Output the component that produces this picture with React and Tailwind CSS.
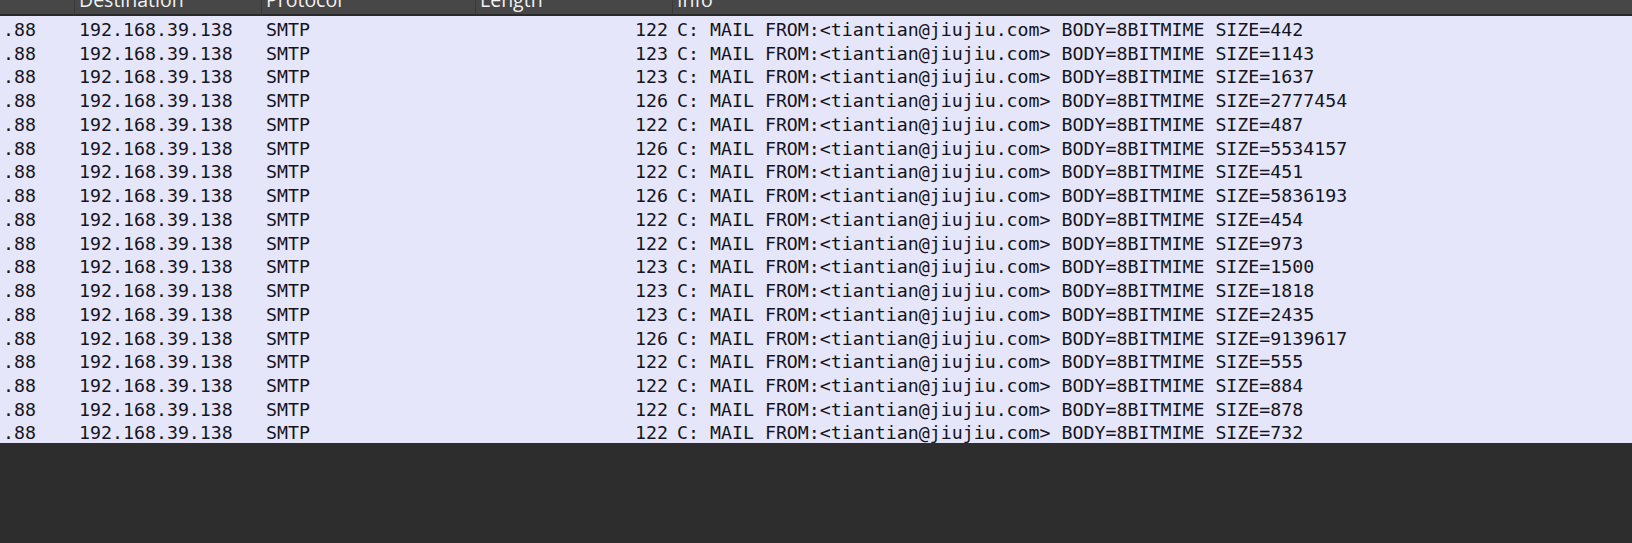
import React from 'react'

const rows = [
  [122, 442],
  [123, 1143],
  [123, 1637],
  [126, 2777454],
  [122, 487],
  [126, 5534157],
  [122, 451],
  [126, 5836193],
  [122, 454],
  [122, 973],
  [123, 1500],
  [123, 1818],
  [123, 2435],
  [126, 9139617],
  [122, 555],
  [122, 884],
  [122, 878],
  [122, 732],
]

const mono = { fontFamily: '"DejaVu Sans Mono", "Liberation Mono", monospace' }

function HeaderCell({ label, className }) {
  return (
    <div className={`h-full overflow-hidden border-l border-[#383838] pl-[4px] ${className}`}>
      <div className="leading-[14px] -mt-[7px] whitespace-nowrap">{label}</div>
    </div>
  )
}

export default function App() {
  return (
    <div className="w-full h-[543px] bg-[#2d2d2d] overflow-hidden">
      {/* Column header */}
      <div
        className="flex h-[16px] bg-[#474747] border-b-2 border-[#2a2a2a] text-[#f2f2f2] text-[19.5px]"
        style={{ fontFamily: '"Open Sans", "Noto Sans", sans-serif' }}
      >
        <div className="w-[74px] h-full" />
        <HeaderCell label="Destination" className="w-[187px]" />
        <HeaderCell label="Protocol" className="w-[214px]" />
        <HeaderCell label="Length" className="w-[197px]" />
        <HeaderCell label="Info" className="flex-1" />
      </div>

      {/* Packet rows */}
      <div className="bg-[#e6e6fa] text-[#141420] text-[18.25px]" style={mono}>
        {rows.map(([len, size], i) => (
          <div key={i} className="flex h-[23.74px] leading-[20px] pt-[4px] whitespace-nowrap">
            <div className="w-[74px] pl-[3px]">.88</div>
            <div className="w-[187px] pl-[5px]">192.168.39.138</div>
            <div className="w-[214px] pl-[5px]">SMTP</div>
            <div className="w-[197px] pr-[4px] text-right">{len}</div>
            <div className="flex-1 pl-[5px]">
              C: MAIL FROM:&lt;tiantian@jiujiu.com&gt; BODY=8BITMIME SIZE={size}
            </div>
          </div>
        ))}
      </div>
    </div>
  )
}
